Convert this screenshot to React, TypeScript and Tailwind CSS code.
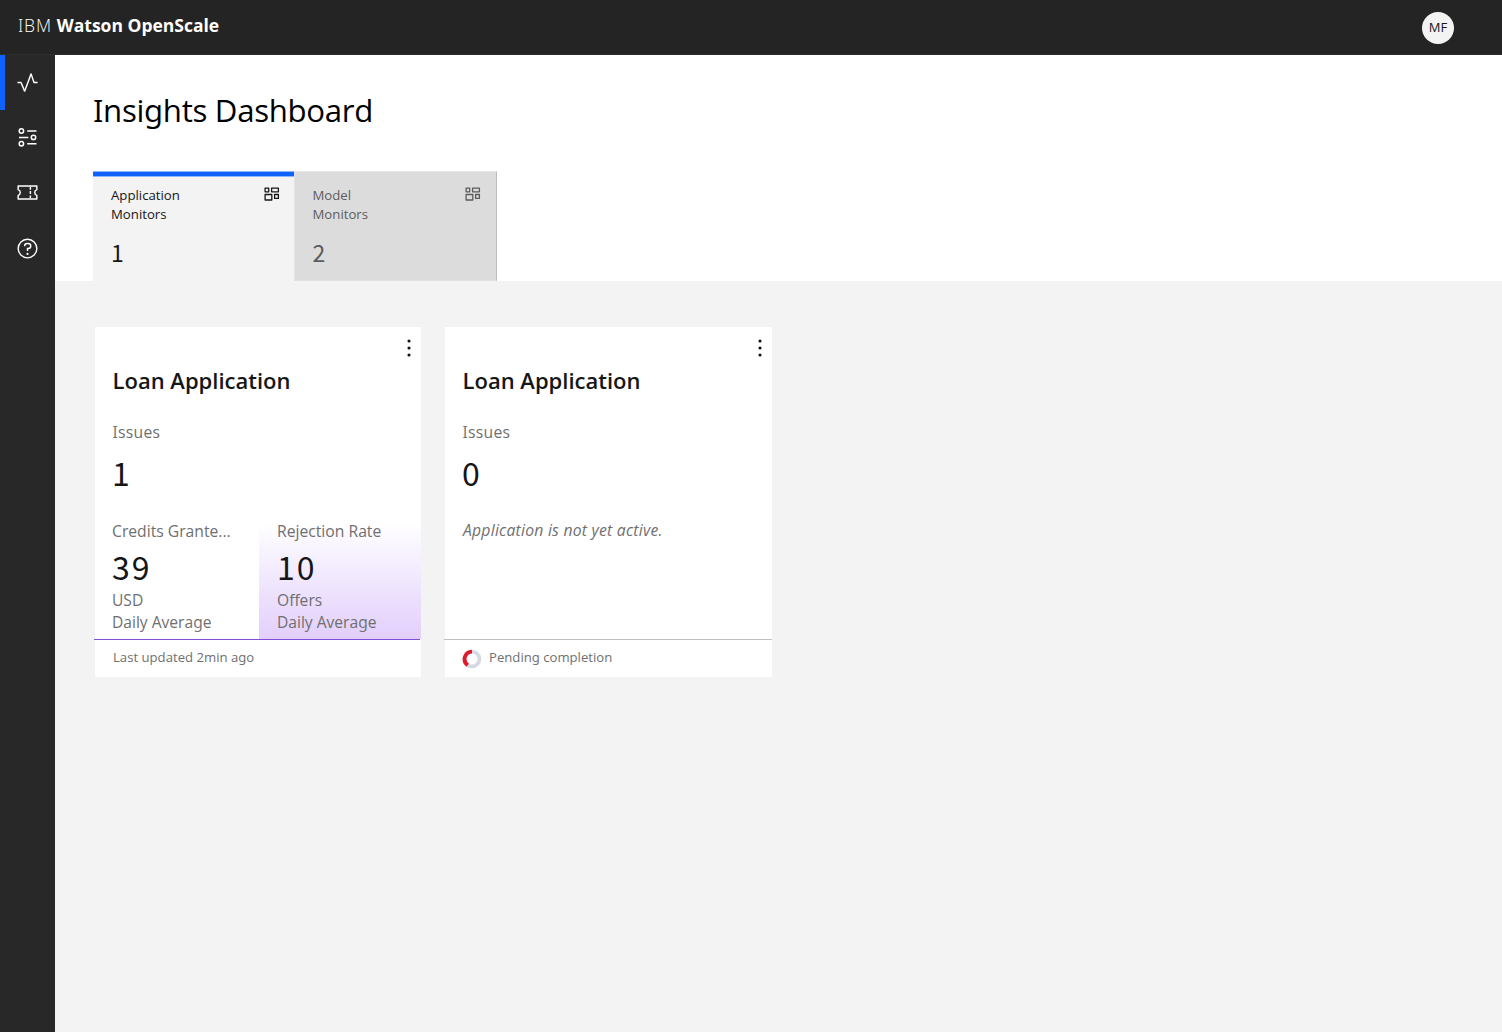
import type { ReactNode } from 'react';

function ActivityIcon() {
  return (
    <svg viewBox="0 0 32 32" className="size-[23px]" fill="currentColor">
      <path d="M12 29a1 1 0 0 1-.92-.62L6.33 17H2v-2h5a1 1 0 0 1 .92.62L12 25.28 20.06 3.65A1 1 0 0 1 21 3a1 1 0 0 1 .93.68L25.72 15H30v2h-5a1 1 0 0 1-.95-.68L21 7 12.94 28.35A1 1 0 0 1 12 29Z" />
    </svg>
  );
}

function SettingsIcon() {
  return (
    <svg viewBox="0 0 23 23" className="size-[23px]" fill="none" stroke="currentColor" strokeWidth="1.5">
      <circle cx="5.4" cy="5" r="2.2" />
      <circle cx="17.5" cy="11.4" r="2.2" />
      <circle cx="5.4" cy="17.8" r="2.2" />
      <path d="M11.2 5h9.3M3 11.4h9.3M11.2 17.8h9.3" />
    </svg>
  );
}

function TicketIcon() {
  return (
    <svg viewBox="0 0 32 32" className="size-[23px]" fill="none" stroke="currentColor" strokeWidth="2" strokeLinejoin="round">
      <path d="M3 7h26v5a4.2 4.2 0 0 0 0 8v5H3v-5a4.2 4.2 0 0 0 0-8Z" />
      <path d="M20 8v4M20 14v4M20 20v4" />
    </svg>
  );
}

function HelpIcon() {
  return (
    <svg viewBox="0 0 32 32" className="mt-[2px] size-[23px]" fill="currentColor">
      <path d="M16 2a14 14 0 1 0 14 14A14 14 0 0 0 16 2Zm0 26a12 12 0 1 1 12-12 12 12 0 0 1-12 12Z" />
      <circle cx="16" cy="23.5" r="1.5" />
      <path d="M17 8h-1.5a4.49 4.49 0 0 0-4.5 4.5v.5h2v-.5a2.5 2.5 0 0 1 2.5-2.5H17a2.5 2.5 0 0 1 0 5h-2v4.5h2V17a4.5 4.5 0 0 0 0-9Z" />
    </svg>
  );
}

function DashboardIcon() {
  return (
    <svg viewBox="0 0 16 14" className="h-[14px] w-4" fill="none" stroke="currentColor" strokeWidth="1.3" strokeLinejoin="round">
      <rect x="1.1" y="1.2" width="3.6" height="3.6" />
      <rect x="7.6" y="1.2" width="6.8" height="3.6" />
      <rect x="1.1" y="7.5" width="6.7" height="5.5" />
      <rect x="10.6" y="7.5" width="3.8" height="3.9" />
    </svg>
  );
}

function OverflowIcon() {
  return (
    <svg viewBox="0 0 4 18" className="h-[18px] w-1" fill="#111">
      <circle cx="2" cy="2" r="1.55" />
      <circle cx="2" cy="9" r="1.55" />
      <circle cx="2" cy="16" r="1.55" />
    </svg>
  );
}

function ProgressRing() {
  return (
    <svg viewBox="0 0 20 20" className="size-5" fill="none" strokeWidth="3.8">
      <circle cx="10" cy="10" r="7.4" stroke="#d5d9e0" />
      <path d="M10 2.6A7.4 7.4 0 0 0 5.8 16.1" stroke="#e0182d" />
    </svg>
  );
}

function NavItem({ children, active = false }: { children: ReactNode; active?: boolean }) {
  return (
    <a className={active ? 'flex h-[55px] items-center justify-center border-l-[5px] border-[#0f62fe] pr-[5px]' : 'flex h-[55px] items-center justify-center'}>
      {children}
    </a>
  );
}

function MonitorTab({ name, count, active = false }: { name: string; count: string; active?: boolean }) {
  return (
    <div
      className={
        active
          ? 'flex h-[110px] w-[201px] flex-col border-t border-[#8fb5fd] bg-[#f3f3f3] text-[#161616]'
          : 'flex h-[110px] w-[203px] flex-col border border-t-[#e9e9e9] border-r-[#bdbdbd] border-b-[#e0e0e0] border-l-[#e4e4e4] bg-[#dcdcdc] text-[#5c5c5c]'
      }
    >
      {active && <div className="-mb-[5px] h-[5px] shrink-0 border-b border-[#8fb5fd] bg-[#0f62fe]" />}
      <div className={active ? 'flex justify-between pt-[14px] pr-3.5 pl-[18px]' : 'flex justify-between pt-[14px] pr-[15px] pl-[17.5px]'}>
        <div className="text-[13.2px] leading-[19px]">
          <p>{name}</p>
          <p>Monitors</p>
        </div>
        <div className="mt-px">
          <DashboardIcon />
        </div>
      </div>
      <p className={active ? "mt-3.5 pl-[18px] font-['Noto_Sans_CJK_SC'] text-[23px] leading-7" : "mt-3.5 pl-[17.5px] font-['Noto_Sans_CJK_SC'] text-[23px] leading-7"}>{count}</p>
    </div>
  );
}

function Metric({ label, value, unit, highlight = false }: { label: string; value: string; unit: string; highlight?: boolean }) {
  return (
    <div
      className={
        highlight
          ? 'flex-1 bg-linear-to-b from-white from-3% to-[#e2cffc] pt-px pl-[18px]'
          : 'w-[164px] pt-px pl-[17px]'
      }
    >
      <p className="text-[15.7px] leading-[22px]">{label}</p>
      <p className="mt-1 font-['Noto_Sans_CJK_SC'] text-[32px] leading-10 tracking-[2px] text-[#161616]">{value}</p>
      <p className="mt-[3px] text-[15.6px] leading-[22px]">{unit}</p>
      <p className="text-[15.6px] leading-[22px]">Daily Average</p>
    </div>
  );
}

function ApplicationCard({ issues, children, footer, divider }: { issues: string; children: ReactNode; footer: ReactNode; divider: ReactNode }) {
  return (
    <article className="flex h-[350px] flex-col bg-white text-[#6f6f6f]">
      <div className="flex h-[39px] shrink-0 justify-end pt-3 pr-[10.5px]">
        <OverflowIcon />
      </div>
      <h2 className="pl-[17.5px] text-[22px] leading-7 font-semibold text-[#161616]">Loan Application</h2>
      <p className="mt-[27px] pl-[17.5px] text-[15.7px] leading-[22px] tracking-[0.3px]">Issues</p>
      <p className="mt-[9px] pl-[17px] font-['Noto_Sans_CJK_SC'] text-[32px] leading-10 text-[#161616]">{issues}</p>
      <div className="mt-[27px] flex h-[120px] shrink-0">{children}</div>
      {divider}
      <footer className="flex h-[37px] items-center pb-[3px] text-[13.15px] leading-[18px]">{footer}</footer>
    </article>
  );
}

export default function App() {
  return (
    <div className="flex h-[1032px] w-[1502px] flex-col bg-[#f3f3f3] font-['Open_Sans',sans-serif] [font-feature-settings:'salt']">
      <header className="flex h-[55px] shrink-0 items-center justify-between border-b border-[#2d2d2d] bg-[#242424] pr-12 pl-[18px] text-white">
        <h1 className="flex gap-[5px] pb-[5px] text-[17.5px] leading-7">
          <span className="font-light tracking-[0.8px]">IBM</span>
          <span className="font-bold">Watson OpenScale</span>
        </h1>
        <div className="mt-px flex size-8 items-center justify-center rounded-full bg-[#f3f3f3] text-[13px] text-[#161616]">MF</div>
      </header>
      <div className="flex min-h-0 flex-1">
        <nav className="w-[55px] shrink-0 bg-[#282828] text-white">
          <NavItem active><ActivityIcon /></NavItem>
          <NavItem><SettingsIcon /></NavItem>
          <NavItem><TicketIcon /></NavItem>
          <NavItem><HelpIcon /></NavItem>
        </nav>
        <main className="flex-1">
          <section className="flex h-[226px] flex-col justify-between bg-white pl-[38px]">
            <h2 className="pt-[33px] text-[31.2px] leading-[44px] tracking-[-0.3px] text-black">Insights Dashboard</h2>
            <div className="flex items-end">
              <MonitorTab name="Application" count="1" active />
              <MonitorTab name="Model" count="2" />
            </div>
          </section>
          <section className="flex gap-6 pt-[46px] pl-10">
            <div className="w-[326px]">
              <ApplicationCard
                issues="1"
                divider={<div className="mr-px -ml-px h-px shrink-0 bg-[#8250d8]" />}
                footer={<p className="pl-[18px]">Last updated 2min ago</p>}
              >
                <Metric label="Credits Grante..." value="39" unit="USD" />
                <Metric label="Rejection Rate" value="10" unit="Offers" highlight />
              </ApplicationCard>
            </div>
            <div className="w-[327px]">
              <ApplicationCard
                issues="0"
                divider={<div className="-ml-px h-px shrink-0 bg-[#c0c0c0]" />}
                footer={
                  <div className="flex items-center gap-[7px] pl-[17px]">
                    <div className="pt-[3px]"><ProgressRing /></div>
                    <p>Pending completion</p>
                  </div>
                }
              >
                <p className="pl-[18px] text-[15.7px] leading-[22px] tracking-[0.25px] italic">Application is not yet active.</p>
              </ApplicationCard>
            </div>
          </section>
        </main>
      </div>
    </div>
  );
}
